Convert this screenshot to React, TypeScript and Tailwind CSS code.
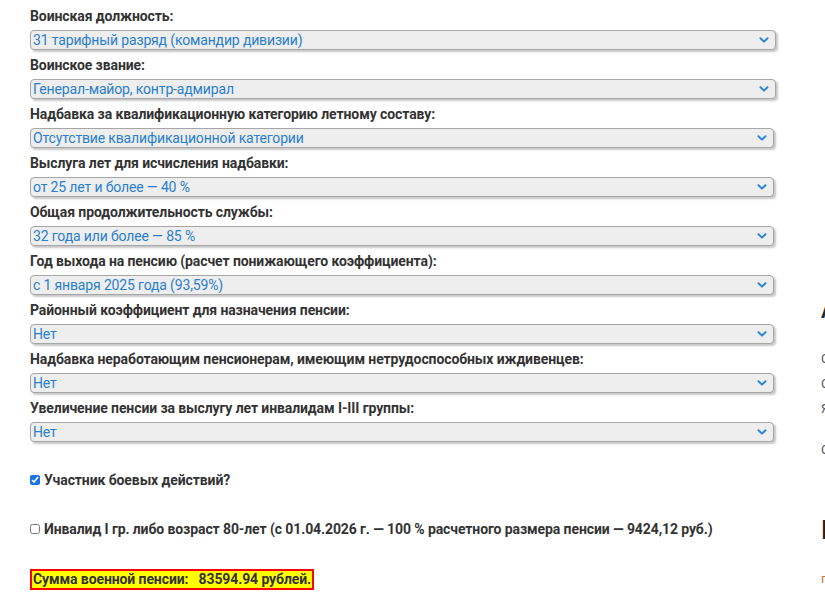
import { useState } from "react";

type Field = { label: string; value: string; wide?: boolean };

const fields: Field[] = [
  { label: "Воинская должность:", value: "31 тарифный разряд (командир дивизии)", wide: true },
  { label: "Воинское звание:", value: "Генерал-майор, контр-адмирал", wide: true },
  { label: "Надбавка за квалификационную категорию летному составу:", value: "Отсутствие квалификационной категории" },
  { label: "Выслуга лет для исчисления надбавки:", value: "от 25 лет и более — 40 %" },
  { label: "Общая продолжительность службы:", value: "32 года или более — 85 %" },
  { label: "Год выхода на пенсию (расчет понижающего коэффициента):", value: "с 1 января 2025 года (93,59%)" },
  { label: "Районный коэффициент для назначения пенсии:", value: "Нет" },
  { label: "Надбавка неработающим пенсионерам, имеющим нетрудоспособных иждивенцев:", value: "Нет" },
  { label: "Увеличение пенсии за выслугу лет инвалидам I-III группы:", value: "Нет" },
];

function Chevron() {
  return (
    <svg className="pointer-events-none absolute right-[7px] top-[7px] h-[6px] w-[10px]" viewBox="0 0 10 6" fill="none">
      <path d="M1.5 1.2 5 4.6 8.5 1.2" stroke="#2a86d8" strokeWidth={2} strokeLinecap="round" strokeLinejoin="round" />
    </svg>
  );
}

function SelectRow({ field }: { field: Field }) {
  return (
    <div className="mb-[3px]">
      <div className="h-[24px] text-[14px] font-bold leading-[24px] text-[#333]">{field.label}</div>
      <div className={`relative mt-[2px] ${field.wide ? "w-[746px]" : "w-[744px]"}`}>
        <select
          defaultValue={field.value}
          className="block h-[20px] w-full appearance-none rounded-[4px] border border-[#a6a6a6] bg-[#eeeeee] pl-[2px] text-[14px] leading-[18px] tracking-[-0.15px] text-[#2a7fcf] shadow-[2px_2px_2px_rgba(0,0,0,0.22)] outline-none"
        >
          <option>{field.value}</option>
        </select>
        <Chevron />
      </div>
    </div>
  );
}

export default function App() {
  const [combat, setCombat] = useState(true);
  const [invalid, setInvalid] = useState(false);

  return (
    <div className="flex h-[612px] w-[825px] overflow-hidden bg-white font-['Roboto',sans-serif] tracking-[-0.1px]">
      <div className="w-[821px] shrink-0 pl-[30px] pt-[4px]">
        {fields.map((f) => (
          <SelectRow key={f.label} field={f} />
        ))}

        <label className="mt-[26px] flex h-[24px] items-center text-[14px] font-bold text-[#333]">
          <input
            type="checkbox"
            checked={combat}
            onChange={(e) => setCombat(e.target.checked)}
            className="mr-[4px] h-[10px] w-[10px] accent-[#1a73e8]"
          />
          Участник боевых действий?
        </label>

        <label className="mt-[25px] flex h-[24px] items-center text-[14px] font-bold text-[#333]">
          <input
            type="checkbox"
            checked={invalid}
            onChange={(e) => setInvalid(e.target.checked)}
            className="mr-[4px] h-[10px] w-[10px]"
          />
          Инвалид I гр. либо возраст 80-лет (с 01.04.2026 г. — 100 % расчетного размера пенсии — 9424,12 руб.)
        </label>

        <div className="mt-[28px] inline-block border-2 border-[#ff0000] bg-[#ffff00] px-[1px] text-[14px] font-bold leading-[17px] text-[#333]">
          Сумма военной пенсии:&nbsp;&nbsp; 83594.94 рублей.
        </div>
      </div>

      <aside className="w-[300px] shrink-0 pt-[298px] text-[13px] text-[#555]">
        <div className="text-[20px] font-bold leading-[26px] text-[#1d2b3a]">Актуально</div>
        <ul className="mt-[25px] space-y-[6px] leading-[19px]">
          <li>Сроки выплаты пенсий</li>
          <li>Средний размер пенсии</li>
          <li>Январская индексация</li>
        </ul>
        <div className="mt-[22px] leading-[19px]">Социальные выплаты</div>
        <div className="mt-[56px] text-[26px] font-bold leading-[30px] text-[#222]">I</div>
        <div className="mt-[24px] text-[#c0762d]">главная</div>
      </aside>
    </div>
  );
}
